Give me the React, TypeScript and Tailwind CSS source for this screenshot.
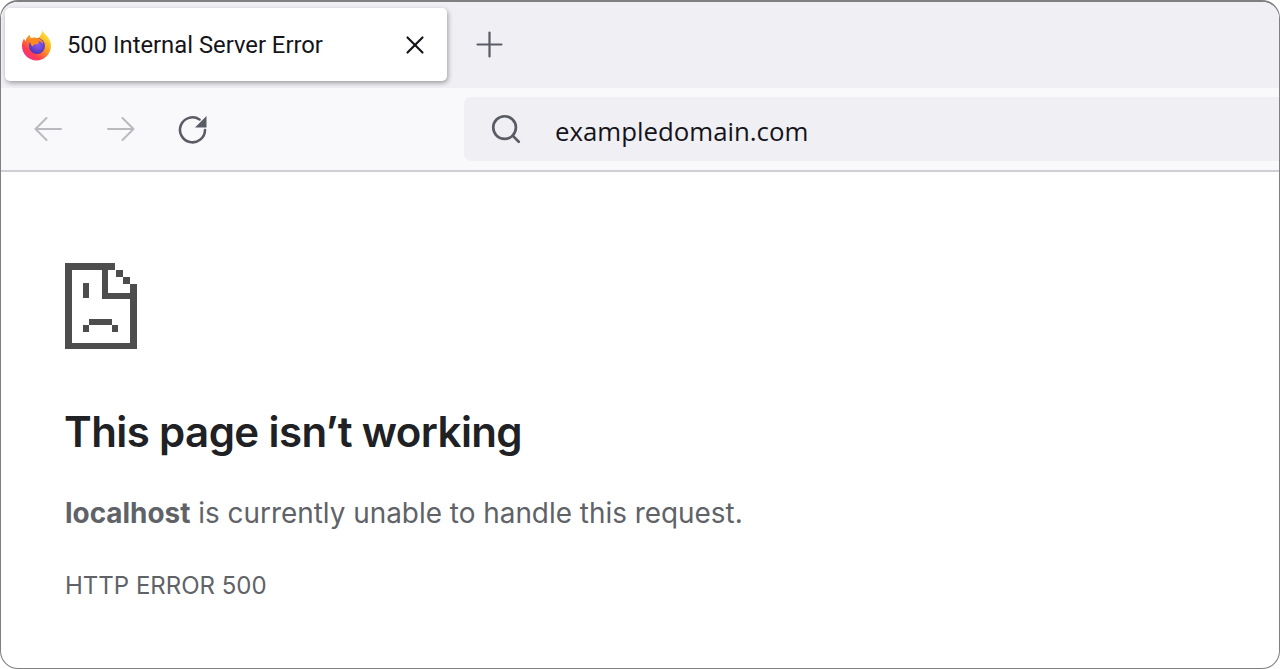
import { Plus, Search, X } from "lucide-react";

function FirefoxLogo() {
  return (
    <svg width="31" height="32" viewBox="0 0 31 32" className="shrink-0">
      <defs>
        <linearGradient id="ffBody" x1="0.8" y1="0.1" x2="0.15" y2="0.95">
          <stop offset="0" stopColor="#ffe226" />
          <stop offset="0.4" stopColor="#ff9a1f" />
          <stop offset="0.75" stopColor="#ff3d4f" />
          <stop offset="1" stopColor="#f0309a" />
        </linearGradient>
        <radialGradient id="ffGlobe" cx="0.55" cy="0.4" r="0.65">
          <stop offset="0" stopColor="#8f5cf0" />
          <stop offset="1" stopColor="#4a2fb8" />
        </radialGradient>
      </defs>
      <path
        d="M21 1c1 3.500 4 4.500 6 7.500 2.500 3.500 3.500 7 2.800 10.500C28.600 26.500 22.500 31.500 15.500 31.500 7.500 31.500 1 25 1 17c0-2.800.7-5.300 2-7.500.3 1.300.8 2.100 1.500 2.800C5 9.500 6.500 7 9 5.800c-.2 1.500.2 2.500 1 3.200 2-.9 5-.8 7 .2C19.500 7 21.500 4.500 21 1z"
        fill="url(#ffBody)"
      />
      <path d="M21 1c1 3.500 4 4.500 6 7.500 1.500 2.200 2.500 4.500 2.800 6.800-1.800-3.200-4-5-7.300-6.300C22 6 22 3.500 21 1z" fill="#ffd23a" />
      <circle cx="16" cy="17" r="8" fill="url(#ffGlobe)" />
      <path d="M8.500 10.500c2.500-2 6-2.500 9.500-1 3 1.300 4.500 3.500 4 5.500-1-1.800-3-3-5.500-2.800 2 .8 1.500 2.500-.5 2.800-2.500.3-4 1-4.500 2.800C10 16.500 9 13.500 8.500 10.500z" fill="#ff8a1f" />
    </svg>
  );
}

function NavArrow({ flip }: { flip?: boolean }) {
  return (
    <svg width="28" height="24" viewBox="0 0 28 24" fill="none" stroke="#b9b9be" strokeWidth="2" strokeLinecap="round" strokeLinejoin="round" className={flip ? "-scale-x-100" : ""}>
      <path d="M27 12H1.500M12.500 1 1.500 12l11 11" />
    </svg>
  );
}

function ReloadIcon() {
  return (
    <svg width="30" height="30" viewBox="0 0 30 30" fill="none">
      <path d="M27 16A12.500 12.500 0 1 1 21.500 5.500" stroke="#5b5b66" strokeWidth="2.600" strokeLinecap="round" />
      <path d="M28.500 2v11.500H17z" fill="#5b5b66" />
    </svg>
  );
}

function SadPage() {
  return (
    <svg width="72" height="86" viewBox="0 0 72 86" fill="#4d4d4d" className="block">
      <rect x="0" y="0" width="7" height="86" />
      <rect x="0" y="0" width="50" height="7" />
      <rect x="37" y="0" width="6" height="36" />
      <rect x="37" y="30" width="35" height="6" />
      <rect x="65" y="21" width="7" height="65" />
      <rect x="0" y="80" width="72" height="6" />
      <rect x="51" y="7" width="7" height="7" />
      <rect x="58" y="14" width="7" height="7" />
      <rect x="18" y="20" width="6" height="15" />
      <rect x="24" y="56" width="23" height="6" />
      <rect x="18" y="62" width="6" height="7" />
      <rect x="47" y="62" width="6" height="7" />
    </svg>
  );
}

export default function App() {
  return (
    <div className="h-screen w-screen overflow-hidden rounded-[18px] border border-t-2 border-[#808080] bg-white flex flex-col">
      {/* Tab strip */}
      <div className="h-[86px] shrink-0 bg-[#f0f0f4] flex items-start pl-[4px] pt-[6px] font-['Roboto',sans-serif]">
        <div className="w-[442px] h-[73px] rounded-[5px] bg-white shadow-[1px_2px_5px_rgba(0,0,0,0.35)] flex items-center pl-[16px] pr-[17px]">
          <FirefoxLogo />
          <span className="ml-[15px] pt-[3px] text-[23.8px] text-[#15141a] flex-1 whitespace-nowrap">500 Internal Server Error</span>
          <X size={30} strokeWidth={1.7} color="#15141a" />
        </div>
        <div className="ml-[22px] mt-[16px]">
          <Plus size={41} strokeWidth={1.3} color="#5b5b66" />
        </div>
      </div>

      {/* Toolbar */}
      <div className="h-[84px] shrink-0 bg-[#f9f9fb] border-b-2 border-[#cfcfd4] flex items-center pl-[33px]">
        <NavArrow />
        <div className="ml-[45px]">
          <NavArrow flip />
        </div>
        <div className="ml-[43px]">
          <ReloadIcon />
        </div>
        <div className="ml-[256px] flex-1 h-[64px] rounded-l-[7px] bg-[#f0f0f4] flex items-center pl-[25px]">
          <Search size={34} strokeWidth={1.9} color="#5b5b66" />
          <span className="ml-[32px] pt-[5px] text-[25.8px] text-[#15141a] font-['Open_Sans',sans-serif]">exampledomain.com</span>
        </div>
      </div>

      {/* Error page */}
      <div className="flex-1 pl-[64px] pt-[91px] font-['Inter',sans-serif]">
        <SadPage />
        <h1 className="mt-[53px] -ml-px text-[42px] leading-[60px] font-semibold tracking-[-0.6px] text-[#202124]">This page isn’t working</h1>
        <p className="mt-[31px] text-[27.9px] leading-[40px] text-[#5f6368]">
          <b className="font-bold">localhost</b> is currently unable to handle this request.
        </p>
        <p className="mt-[37px] text-[24px] leading-[32px] text-[#5f6368]">HTTP ERROR 500</p>
      </div>
    </div>
  );
}
